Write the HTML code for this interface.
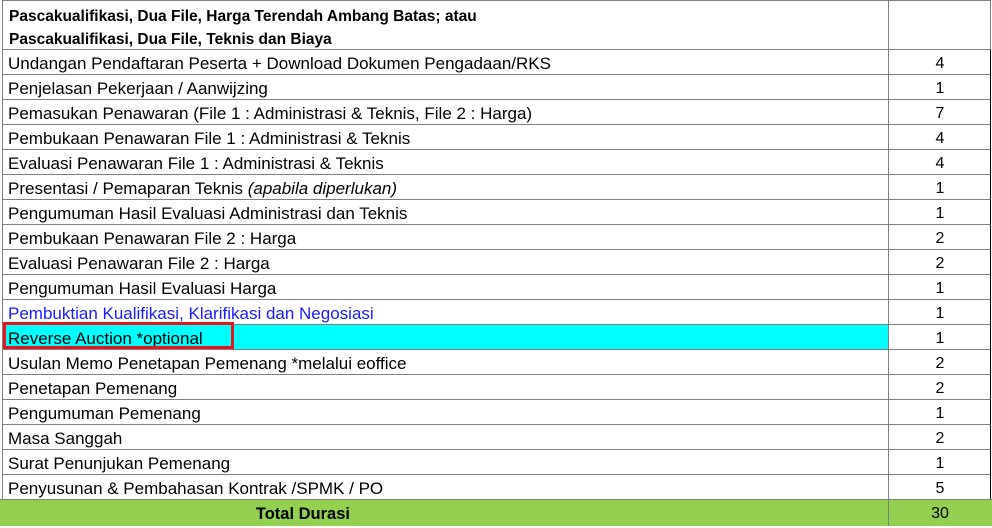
<!DOCTYPE html>
<html><head><meta charset="utf-8"><style>
*{margin:0;padding:0;box-sizing:border-box}
body{width:992px;height:526px;background:#fff;position:relative;overflow:hidden;font-family:"Liberation Sans",Arial,sans-serif;font-size:17px;color:#000}
.r{position:absolute;left:2px;width:989px;height:26px;border-top:1px solid #808080;border-left:1px solid #808080;border-right:1px solid #000}
.l{position:absolute;left:0;top:0;width:886px;height:24px;padding-left:5px;line-height:27px;white-space:nowrap;border-right:1px solid #808080}
.n{position:absolute;left:887px;top:0;width:100px;height:24px;line-height:27px;text-align:center;font-size:16px}
</style></head><body>
<div style="position:absolute;left:2px;top:0;width:989px;height:50px;border-top:1px solid #808080;border-left:1px solid #808080;border-right:1px solid #808080">
<div style="position:absolute;left:0;top:0;width:886px;height:49px;border-right:1px solid #808080;padding:4px 0 0 6px;font-weight:bold;line-height:23px;font-size:15.5px">Pascakualifikasi, Dua File, Harga Terendah Ambang Batas; atau<br>Pascakualifikasi, Dua File, Teknis dan Biaya</div>
</div>
<div class="r" style="top:49px"><div class="l">Undangan Pendaftaran Peserta + Download Dokumen Pengadaan/RKS</div><div class="n">4</div></div>
<div class="r" style="top:74px"><div class="l">Penjelasan Pekerjaan / Aanwijzing</div><div class="n">1</div></div>
<div class="r" style="top:99px"><div class="l">Pemasukan Penawaran (File 1 : Administrasi &amp; Teknis, File 2 : Harga)</div><div class="n">7</div></div>
<div class="r" style="top:124px"><div class="l">Pembukaan Penawaran File 1 : Administrasi &amp; Teknis</div><div class="n">4</div></div>
<div class="r" style="top:149px"><div class="l">Evaluasi Penawaran File 1 : Administrasi &amp; Teknis</div><div class="n">4</div></div>
<div class="r" style="top:174px"><div class="l">Presentasi / Pemaparan Teknis <i>(apabila diperlukan)</i></div><div class="n">1</div></div>
<div class="r" style="top:199px"><div class="l">Pengumuman Hasil Evaluasi Administrasi dan Teknis</div><div class="n">1</div></div>
<div class="r" style="top:224px"><div class="l">Pembukaan Penawaran File 2 : Harga</div><div class="n">2</div></div>
<div class="r" style="top:249px"><div class="l">Evaluasi Penawaran File 2 : Harga</div><div class="n">2</div></div>
<div class="r" style="top:274px"><div class="l">Pengumuman Hasil Evaluasi Harga</div><div class="n">1</div></div>
<div class="r" style="top:299px"><div class="l" style="color:#1a1aff">Pembuktian Kualifikasi, Klarifikasi dan Negosiasi</div><div class="n">1</div></div>
<div class="r" style="top:324px"><div class="l" style="background:#00ffff">Reverse Auction *optional</div><div class="n">1</div></div>
<div style="position:absolute;left:3px;top:322px;width:231px;height:27px;border:3px solid #e8141c"></div>
<div class="r" style="top:349px"><div class="l">Usulan Memo Penetapan Pemenang *melalui eoffice</div><div class="n">2</div></div>
<div class="r" style="top:374px"><div class="l">Penetapan Pemenang</div><div class="n">2</div></div>
<div class="r" style="top:399px"><div class="l">Pengumuman Pemenang</div><div class="n">1</div></div>
<div class="r" style="top:424px"><div class="l">Masa Sanggah</div><div class="n">2</div></div>
<div class="r" style="top:449px"><div class="l">Surat Penunjukan Pemenang</div><div class="n">1</div></div>
<div class="r" style="top:474px"><div class="l">Penyusunan &amp; Pembahasan Kontrak /SPMK / PO</div><div class="n">5</div></div>
<div style="position:absolute;left:0;top:499px;width:992px;height:27px;background:#92d050;border-top:1px solid #808080">
<div style="position:absolute;left:0;top:0;width:889px;height:26px;border-right:1px solid #808080;text-align:right;padding-right:538px;line-height:28px;font-weight:bold;font-size:16.5px">Total Durasi</div>
<div style="position:absolute;left:889px;top:0;width:102px;height:26px;line-height:28px;text-align:center;font-size:16px">30</div>
</div>
</body></html>
